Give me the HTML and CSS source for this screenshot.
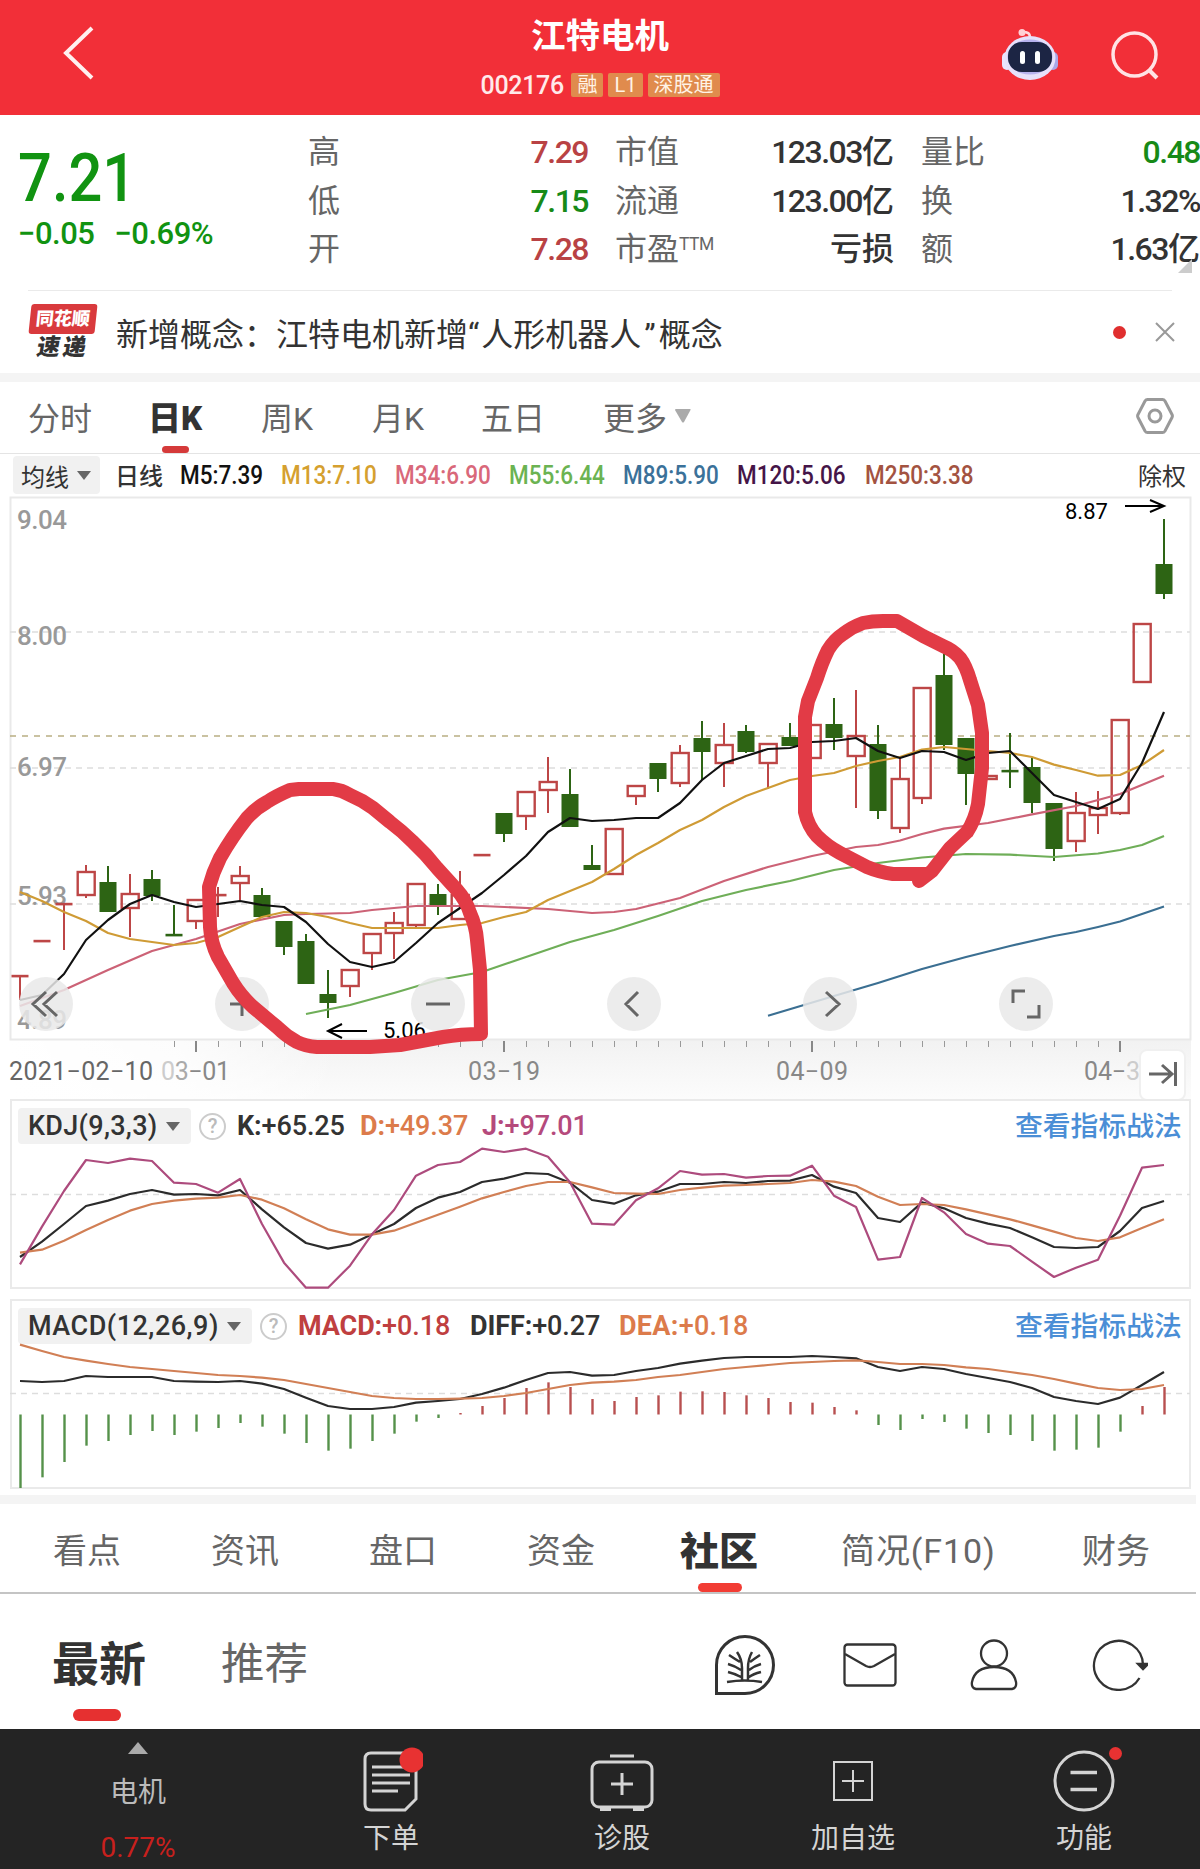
FILE: index.html
```html
<!DOCTYPE html>
<html lang="zh-CN">
<head>
<meta charset="utf-8">
<title>江特电机 002176</title>
<link rel="stylesheet" href="styles.css">
</head>
<body>
<div class="app">
  <header class="topbar">
    <svg class="back" width="40" height="60" viewBox="0 0 40 60"><path d="M34 5 8 30l26 25"/></svg>
    <div class="stock">
      <h1>江特电机</h1>
      <div class="codes"><span class="code">002176</span><span class="tag">融</span><span class="tag">L1</span><span class="tag">深股通</span></div>
    </div>
    <div class="topicons">
      <svg width="58" height="56" viewBox="0 0 58 56">
        <path d="M29 10c0-5-2-6-8-6" fill="none" stroke="#ffd9dd" stroke-width="2.5"/><circle cx="21" cy="4.500" r="3.500" fill="#ffd0d5"/>
        <rect x="1" y="24" width="10" height="18" rx="5" fill="#e9e4ff"/><rect x="47" y="24" width="10" height="18" rx="5" fill="#a9a6e8"/>
        <ellipse cx="29" cy="30" rx="25.500" ry="22" fill="#e6e1fb"/>
        <ellipse cx="29" cy="29" rx="22.500" ry="17.500" fill="#b7b2ee"/>
        <rect x="7" y="14" width="44" height="30" rx="14" fill="#1c2544"/>
        <rect x="19" y="23" width="5" height="13" rx="2.500" fill="#fff"/><rect x="34" y="23" width="5" height="13" rx="2.500" fill="#fff"/>
      </svg>
      <svg width="50" height="50" viewBox="0 0 50 50"><circle cx="24.500" cy="24.500" r="21.500" fill="none" stroke="#ffe3e5" stroke-width="3.500"/><path d="m39 40 8 8" stroke="#ffe3e5" stroke-width="4"/></svg>
    </div>
  </header>

  <section class="quote">
    <div class="price">
      <div class="last">7.21</div>
      <div class="change"><span>−0.05</span><span>−0.69%</span></div>
    </div>
    <dl class="stats">
      <dt>高</dt><dd class="up">7.29</dd><dt>市值</dt><dd>123.03<b>亿</b></dd><dt>量比</dt><dd class="down">0.48</dd>
      <dt>低</dt><dd class="down">7.15</dd><dt>流通</dt><dd>123.00<b>亿</b></dd><dt>换</dt><dd>1.32%</dd>
      <dt>开</dt><dd class="up">7.28</dd><dt>市盈<sup>TTM</sup></dt><dd><b>亏损</b></dd><dt>额</dt><dd>1.63<b>亿</b></dd>
    </dl>
    <i class="corner"></i>
  </section>

  <section class="news">
    <div class="brand"><span class="brand-top">同花顺</span><span class="brand-bottom">速递</span></div>
    <p>新增概念：江特电机新增<q>人形机器人</q>概念</p>
    <i class="dot"></i>
    <svg width="20" height="20" viewBox="0 0 20 20"><path d="m1 1 18 18M19 1 1 19" stroke="#999" stroke-width="2"/></svg>
  </section>

  <nav class="periods">
    <span>分时</span><span class="on">日K</span><span>周K</span><span>月K</span><span>五日</span><span class="more">更多<svg width="18" height="16" viewBox="0 0 18 16"><path d="M2 1h14q1 0 .5 1L10 14q-1 1-2 0L1 2Q1 1 2 1z" fill="#aaa"/></svg></span>
    <svg class="gear" width="38" height="38" viewBox="0 0 38 38"><path d="M11.500 2.500h15q1.500 0 2.500 1.500l7 13.500q.8 1.500 0 3L29 34q-1 1.500-2.500 1.500h-15Q10 35.500 9 34L2 20.500q-.8-1.500 0-3L9 4q1-1.500 2.500-1.500z"/><circle cx="19" cy="19" r="6"/></svg>
  </nav>

  <div class="averages">
    <span class="pill">均线<i class="tri"></i></span><span class="cn">日线</span>
    <span class="ma m5">M5:7.39</span><span class="ma m13">M13:7.10</span><span class="ma m34">M34:6.90</span><span class="ma m55">M55:6.44</span><span class="ma m89">M89:5.90</span><span class="ma m120">M120:5.06</span><span class="ma m250">M250:3.38</span>
    <span class="adjust">除权</span>
  </div>

  <svg class="kline" id="kline" width="1200" height="603" viewBox="0 496 1200 603">
    <defs>
      <linearGradient id="axisfade" x1="0" y1="0" x2="0" y2="1"><stop offset="0" stop-color="#f2f2f2"/><stop offset="1" stop-color="#fcfcfc"/></linearGradient>
      <linearGradient id="leftfade"><stop offset="0" stop-color="#fff"/><stop offset=".5" stop-color="#fff" stop-opacity=".8"/><stop offset="1" stop-color="#fff" stop-opacity="0"/></linearGradient>
    </defs>
    <rect x="10" y="1040" width="1181" height="59" fill="url(#axisfade)"/>
    <rect x="10" y="1040" width="330" height="59" fill="url(#leftfade)"/>
    <rect x="10.500" y="497.500" width="1180" height="542" fill="none" stroke="#e9e9e9" stroke-width="2"/>
    <g class="scale">
      <path class="grid" d="M10 632H1190M10 768H1190M10 904H1190"/>
      <path d="M10 736H1190" stroke="#b9ae82" stroke-width="1.500" stroke-dasharray="6 6"/>
      <text x="17" y="529" textLength="50">9.04</text><text x="17" y="645" textLength="50">8.00</text><text x="17" y="776" textLength="50">6.97</text><text x="17" y="905" textLength="50">5.93</text><text x="17" y="1029" textLength="50">4.89</text>
    </g>
    <g id="candles"></g>
    <g id="lines" class="lines"></g>
    <g class="marks"><text x="1065" y="519">8.87</text><text x="383" y="1038">5.06</text>
      <path d="M1125 506h38m-13-6 14 6-14 6M367 1031h-38m13-7-14 7 14 7"/></g>
    <g class="tools">
      <circle cx="46" cy="1004" r="27"/><circle cx="242" cy="1004" r="27"/><circle cx="438" cy="1004" r="27"/><circle cx="634" cy="1004" r="27"/><circle cx="830" cy="1004" r="27"/><circle cx="1026" cy="1004" r="27"/>
      <path d="M46 992 33 1004l13 12M57 992l-13 12 13 12M230 1004h24M242 992v24M426 1004h24M638 992l-12 12 12 12M826 992l13 12-13 12M1013 1003v-12h12M1039 1005v12h-12"/>
    </g>
    <path id="ticks" stroke="#999" stroke-width="1" fill="none"/>
    <path d="M196 1041v11M504 1041v11M812 1041v11M1120 1041v11" stroke="#888" stroke-width="2"/>
    <g class="dates"><text x="9" y="1080" textLength="144" fill="#666">2021−02−10</text><text x="161" y="1080" textLength="69"><tspan fill="#ccc">0</tspan><tspan fill="#aaa">3</tspan>−01</text><text x="468" y="1080" textLength="72">03−19</text><text x="776" y="1080" textLength="72">04−09</text><text x="1084" y="1080" textLength="56">04−<tspan fill="#ccc">3</tspan></text></g>
    <rect x="1140" y="1050" width="45" height="50" rx="7" fill="#fff" stroke="#f0f0f0" stroke-width="2"/>
    <path d="M1149 1074h23m-10-9 10 9-10 9M1175.500 1062v24" fill="none" stroke="#666" stroke-width="3"/>
    <g class="scribble">
      <path d="M299 789H333Q342 790 350 795Q362 800 373 808L390 822Q402 831 413 842Q426 854 437 868L457 890Q466 900 470 913Q476 926 477 940L480 970L481 1034Q461 1034 443 1037L400 1045L370 1047H317Q305 1046 297 1042Q286 1036 277 1027L253 1007Q241 996 233 983L218 957Q211 943 210 927L209 887Q213 872 220 858Q232 837 247 818Q256 808 267 802Q276 796 290 790Z"/>
      <path d="M919 881 932 871 950 848 967 832Q975 820 978 804L982 768V733L978 705 970 680Q966 666 960 658Q953 650 943 646L923 636 897 621H883Q872 621 863 623Q852 627 843 634Q834 640 828 650Q822 662 817 678L808 701 805 717V812Q808 826 817 836Q827 846 840 853L867 867Q879 872 893 874H927"/>
    </g>
  </svg>

  <section class="panel kdj">
    <div class="panel-head"><span class="pill">KDJ(9,3,3)<i class="tri"></i></span><span class="help">?</span>
      <span class="v1"><b>K:</b>+65.25</span><span class="v2"><b>D:</b>+49.37</span><span class="v3"><b>J:</b>+97.01</span><a>查看指标战法</a></div>
    <svg class="plot lines" id="kdj" width="1180" height="190" viewBox="10 1099 1180 190"><path class="grid" d="M10 1194.500H1190"/></svg>
  </section>
  <section class="panel macd">
    <div class="panel-head"><span class="pill">MACD(12,26,9)<i class="tri"></i></span><span class="help">?</span>
      <span class="v1"><b>MACD:</b>+0.18</span><span class="v2"><b>DIFF:</b>+0.27</span><span class="v3"><b>DEA:</b>+0.18</span><a>查看指标战法</a></div>
    <svg class="plot lines" id="macd" width="1180" height="190" viewBox="10 1299 1180 190"><path class="grid" d="M10 1393.500H1190"/></svg>
  </section>

  <nav class="sections"><span>看点</span><span>资讯</span><span>盘口</span><span>资金</span><span class="on">社区</span><span class="profile">简况(F10)</span><span>财务</span></nav>

  <div class="feed">
    <span class="on">最新</span><span>推荐</span>
    <svg width="60" height="60" viewBox="0 0 60 60" stroke-width="3"><path d="M1.500 58.500V30a28.500 28.500 0 1 1 28.500 28.500z"/><path stroke-width="2.500" d="M12 47q18-3 35 0M27 46V33q0-9-5-16M33 46V33q0-9 4-16M14 20q6 4 11 7M13 29q7 2 13 6M13 37q8 2 13 5M45 20q-6 4-10 7M46 29q-7 2-12 6M46 37q-8 2-12 5"/></svg>
    <svg width="54" height="50" viewBox="0 0 54 50"><rect x="1.500" y="4.500" width="51" height="41" rx="3"/><path d="m2 14 21 12q4 2 8 0l21-12"/></svg>
    <svg width="48" height="52" viewBox="0 0 48 52"><circle cx="24" cy="14.500" r="13"/><path d="M6 50q-5-1-4-7 3-15 22-15t22 15q1 6-4 7z"/></svg>
    <svg width="56" height="52" viewBox="0 0 56 52"><path d="M47.500 39A24.500 24.500 0 1 1 51 26"/><path d="m46 25 5 5 5-5z" fill="#333"/></svg>
  </div>

  <footer class="tabbar">
    <div class="sector"><i></i><span>电机</span><em>0.77%</em></div>
    <div><svg width="64" height="68" viewBox="0 0 64 68"><path d="M12 9h33q12 0 12 10v36L46 66H12q-6 0-6-6V15q0-6 6-6z"/><path d="M13 23h35M13 31h38M13 39h38M13 47h26"/><circle cx="53" cy="16" r="12.500" fill="#e83232" stroke="none"/></svg><span>下单</span></div>
    <div><svg width="64" height="68" viewBox="0 0 64 68"><rect x="2" y="18" width="60" height="45" rx="7"/><path d="M20 12h24M32 29v22M21 40h22"/><path d="M10 65h11M43 65h11" stroke-width="4"/></svg><span>诊股</span></div>
    <div><svg width="64" height="68" viewBox="0 0 64 68" stroke-width="2"><rect x="13" y="18" width="38" height="38"/><path d="M32 26v22M21 37h22"/></svg><span>加自选</span></div>
    <div><svg width="78" height="68" viewBox="-3 0 78 68"><circle cx="36" cy="37" r="29"/><path stroke-width="3.500" d="M22.500 28.500h26.500M22.500 45.500h26.500"/><circle cx="67.500" cy="9.500" r="6.500" fill="#e83232" stroke="none"/></svg><span>功能</span></div>
  </footer>
</div>
<script src="charts.js"></script>
</body>
</html>
```
FILE: styles.css
```css
* { box-sizing: border-box; }
body { margin: 0; background: #fff; color: #333; font-family: Roboto, "Noto Sans CJK SC", sans-serif; }
.app { width: 1200px; height: 1869px; overflow: hidden; display: flex; flex-direction: column; }
.app > * { flex: none; }
h1, p, dl, dd { margin: 0; }
svg { display: block; flex: none; }

.topbar { height: 115px; background: #f22f38; color: #fff; display: grid; grid-template-columns: 400px 400px 400px; }
.back { margin: 23px 0 0 58px; fill: none; stroke: #fff0f0; stroke-width: 4; }
.stock { display: flex; flex-direction: column; align-items: center; padding-top: 14px; }
.stock h1 { font-size: 34.500px; line-height: 44px; font-weight: 700; }
.codes { display: flex; gap: 5px; margin-top: 15px; height: 24px; align-items: center; }
.code { font-size: 25px; width: 86px; font-weight: 500; letter-spacing: -.3px; color: #ffeaea; }
.tag { height: 24px; line-height: 24px; padding: 0 6px; font-size: 20px; background: #e08b4d; border-radius: 2px; color: #fff3e6; }
.topicons { display: flex; gap: 51px; padding: 28px 0 0 201px; }
.topicons svg + svg { margin-top: 2px; }

.quote { position: relative; height: 175px; display: grid; grid-template-columns: 308px 892px; }
.price { padding: 28px 0 0 18px; color: #119311; }
.last { font-size: 67px; line-height: 70px; font-weight: 500; transform: scaleX(.89); transform-origin: left; }
.change { display: flex; gap: 20px; font-size: 31px; font-weight: 500; letter-spacing: -.5px; line-height: 40px; margin-top: 1px; }
.stats { display: grid; grid-template-columns: 90px 190px 117px 189px 109px 197px; grid-auto-rows: 48.700px; padding-top: 13px; line-height: 48px; font-size: 32px; white-space: nowrap; }
.stats dt { color: #666; }
.stats dt:nth-of-type(3n+2) { padding-left: 27px; }
.stats dt:nth-of-type(3n) { padding-left: 27px; }
.stats dd { text-align: right; font-weight: 500; letter-spacing: -1.500px; }
.stats b { font-weight: 500; letter-spacing: 0; }
.stats sup { font-size: 17.500px; letter-spacing: -.5px; line-height: 1; vertical-align: 10px; }
.stats .up { color: #b94244; }
.stats .down { color: #178a17; }
.corner { position: absolute; right: 8px; bottom: 17px; width: 14px; height: 14px; background: #ccc; clip-path: polygon(100% 0, 100% 100%, 0 100%); }

.news { height: 83px; margin-left: 28px; border-top: 1px solid #eaeaea; display: grid; grid-template-columns: 88px 997px 42px 20px; align-items: center; width: 1144px; }
.news p { font-size: 32px; white-space: nowrap; }
.news q { quotes: "“" "”"; }
.news q::before { margin-right: 2px; }
.news q::after { margin: 0 3px 0 3px; }
.news .dot { width: 13px; height: 13px; border-radius: 50%; background: #e02f2f; }
.brand { display: flex; flex-direction: column; width: 70px; align-items: center; font-weight: 900; }
.brand-top { width: 66px; height: 30px; line-height: 29px; font-size: 18px; text-align: center; color: #fff; background: #d93a3d; border-radius: 3px; transform: skewX(-6deg); }
.brand-bottom { font-size: 23px; line-height: 27px; letter-spacing: 3px; transform: skewX(-10deg); }

.periods { border-top: 9px solid #f4f4f4; border-bottom: 1px solid #e4e4e4; height: 81px; display: grid; grid-template-columns: 120px 113px 111px 109px 122px 533px 38px; padding: 0 0 3px 28px; align-items: center; font-size: 32px; color: #666; }
.periods .on { position: relative; font-size: 33px; font-weight: 900; color: #333; }
.periods .on::after { content: ""; position: absolute; left: 14px; bottom: -13px; width: 27px; height: 7px; border-radius: 4px; background: #d53a3a; }
.more { display: flex; align-items: center; gap: 7px; }
.gear { fill: none; stroke: #999; stroke-width: 3; }

.averages { height: 42px; display: grid; grid-template-columns: 102px 65px 101px 114px 114px 114px 114px 128px 273px 60px; padding-left: 13px; align-items: center; font-size: 25px; }
.averages .cn, .averages .adjust { font-size: 24px; margin-top: -1px; }
.averages .cn { font-weight: 500; }
.ma { font-weight: 500; transform: scaleX(.9); transform-origin: left; white-space: nowrap; }
.m5 { color: #111; }
.m13 { color: #d5a02f; }
.m34 { color: #d9687a; }
.m55 { color: #6bb352; }
.m89 { color: #3b7199; }
.m120 { color: #451548; }
.m250 { color: #a35341; }
.pill { display: flex; align-items: center; background: #f1f1f1; border-radius: 4px; }
.tri { border: 7px solid transparent; border-top: 9px solid #666; border-bottom: 0; margin-left: 8px; }
.averages .pill { width: 87px; height: 38px; font-size: 24px; padding-left: 8px; }

.kline { height: 603px; font-size: 26px; }
.kline text { font-family: Roboto, sans-serif; }
.scale text { fill: #999; font-weight: 500; }
.grid { stroke: #ddd; stroke-width: 1.500; stroke-dasharray: 6 5; }
.lines polyline { fill: none; stroke-width: 2.200; stroke-linejoin: round; }
.marks { font-size: 22px; }
.marks path { fill: none; stroke: #000; stroke-width: 2; }
.tools circle { fill: #e9e9e9; fill-opacity: .85; }
.tools path { fill: none; stroke: #666; stroke-width: 3; }
.dates { fill: #888; font-size: 25px; }
.scribble path { fill: none; stroke: #e23b46; stroke-width: 14; stroke-linejoin: round; stroke-linecap: round; }

.panel { width: 1181px; height: 190px; margin-left: 10px; border: 2px solid #eaeaea; position: relative; }
.macd { margin-top: 10px; }
.panel-head { display: grid; align-items: center; height: 36px; margin: 7px 0 0 6px; font-size: 27px; }
.kdj .panel-head { grid-template-columns: 181px 38px 123px 122px 533px 170px; }
.macd .panel-head { grid-template-columns: 242px 38px 172px 149px 396px 170px; }
.panel-head b { font-weight: 700; }
.panel-head span { font-weight: 500; letter-spacing: -.1px; }
.panel-head .pill { height: 36px; padding-left: 10px; letter-spacing: .3px; }
.kdj .pill { width: 173px; }
.macd .pill { width: 234px; }
.macd .panel-head .pill { letter-spacing: .5px; }
.macd .v3 { letter-spacing: .3px; }
.panel-head a { font-size: 27.800px; line-height: 34px; padding-top: 1px; font-weight: 500; color: #4a8ed6; }
.help { width: 27px; height: 27px; border: 2px solid #ccc; border-radius: 50%; color: #bbb; font-size: 20px; line-height: 23px; text-align: center; }
.kdj .v2, .macd .v3 { color: #dc7b4b; }
.kdj .v3 { color: #b54a7c; }
.macd .v1 { color: #bf3f40; }
.plot { position: absolute; left: -2px; top: -2px; }

.sections { margin-top: 6px; border-top: 9px solid #f4f4f4; border-bottom: 2px solid #c4c4c4; height: 99px; width: 1196px; display: grid; grid-template-columns: 158px 158px 158px 153px 161px 241px 80px; padding-left: 53px; align-items: center; font-size: 34px; color: #666; }
.sections .on { position: relative; font-size: 39px; font-weight: 900; color: #333; }
.sections .on::after { content: ""; position: absolute; left: 18px; bottom: -16px; width: 44px; height: 9px; border-radius: 5px; background: #f23c34; }
.profile { letter-spacing: .9px; }

.feed { height: 135px; display: grid; grid-template-columns: 169px 494px 128px 127px 122px 60px; padding: 6px 0 0 52px; align-items: center; font-size: 43.500px; color: #666; }
.feed span { line-height: 60px; margin-top: 1px; }
.feed svg { fill: none; stroke: #333; stroke-width: 2.300; }
.feed svg:first-of-type { stroke-width: 3; }
.feed .on { position: relative; font-size: 47px; font-weight: 700; color: #333; }
.feed .on::after { content: ""; position: absolute; left: 21px; bottom: -26px; width: 48px; height: 12px; border-radius: 6px; background: #e63030; }

.tabbar { height: 140px; background: #242424; display: grid; grid-template-columns: 276px 230px 232px 230px 232px; color: #d4d4d4; font-size: 28px; }
.tabbar > div { display: flex; flex-direction: column; align-items: center; justify-content: space-between; padding: 15px 0 10px; }
.tabbar svg { fill: none; stroke: #d4d4d4; stroke-width: 3; }
.tabbar svg[stroke-width="2"] { stroke-width: 2; }
.tabbar span { line-height: 40px; }
.tabbar .sector { padding: 13px 0 4px; color: #bbb; }
.sector i { border: 10px solid transparent; border-bottom: 12px solid #aaa; border-top: 0; }
.sector em { font-style: normal; line-height: 34px; color: #c8201d; }
```
FILE: charts.js
```js
const NS = "http://www.w3.org/2000/svg";
const xAt = i => 20 + 22 * i;
function add(parent, tag, attrs) {
  const el = document.createElementNS(NS, tag);
  for (const k in attrs) el.setAttribute(k, attrs[k]);
  parent.appendChild(el);
}
function line(parent, color, pts) {
  add(parent, "polyline", { stroke: color, points: pts.map(p => xAt(p[0]) + "," + p[1]).join(" ") });
}
const series = (values, start = 0) => values.map((v, i) => [i + start, v]);

// [direction, high, body top, body bottom, low]
const R = 1, G = 0;
const candles = [
  [R,976,976,976,1000],[R,941,941,941,941],[R,904,904,904,950],[R,865,871,896,898],[G,866,882,912,912],
  [R,874,893,909,937],[G,870,879,896,901],[G,905,935,936,936],[R,899,899,922,929],[R,887,895,895,917],
  [R,866,875,884,900],[G,888,895,917,917],[G,921,921,947,955],[G,934,941,984,984],[G,970,994,1003,1018],
  [R,969,969,987,997],[R,933,933,954,970],[R,912,922,934,959],[R,883,883,926,929],[G,884,894,905,915],
  [R,871,894,920,920],[R,855,855,855,855],[G,813,813,834,842],[R,791,791,817,830],[R,757,781,791,813],
  [G,769,794,827,827],[G,845,865,870,870],[R,828,828,875,875],[R,785,785,797,805],[G,763,763,779,792],
  [R,745,752,784,787],[G,721,738,752,780],[R,723,744,764,787],[G,725,731,752,753],[R,743,743,764,789],
  [G,723,737,746,746],[R,724,724,759,759],[G,698,724,738,750],[R,690,735,757,808],[G,725,744,811,819],
  [R,757,778,829,833],[R,687,687,799,804],[G,654,675,745,750],[G,738,738,774,805],[R,775,775,780,780],
  [G,733,771,771,788],[G,758,767,803,813],[G,803,803,849,861],[R,792,812,842,852],[R,791,807,816,834],
  [R,719,719,814,815],[R,623,623,683,683],[G,519,564,594,599]
];
const cg = document.getElementById("candles");
candles.forEach(([dir, hi, top, bot, lo], i) => {
  const x = xAt(i), c = dir ? "#bd4646" : "#2d6414";
  if (hi < top) add(cg, "path", { d: `M${x} ${hi}V${top}`, stroke: c, "stroke-width": 2 });
  if (lo > bot) add(cg, "path", { d: `M${x} ${bot}V${lo}`, stroke: c, "stroke-width": 2 });
  if (bot - top < 3) add(cg, "rect", { x: x - 8.5, y: top - 1.2, width: 17, height: 2.6, fill: c });
  else if (dir) add(cg, "rect", { x: x - 8.3, y: top + 1, width: 17, height: bot - top - 2, fill: "none", stroke: c, "stroke-width": 2.4 });
  else add(cg, "rect", { x: x - 8.5, y: top, width: 17, height: bot - top, fill: c });
});

const lg = document.getElementById("lines");
line(lg, "#3b6f92", [[34,1015.7],[37,996],[39,983],[41,969],[43,957],[45,946],[47,936],[48,932],[49,927],[50,921.5],[51,914],[52,906.5]]);
line(lg, "#6fae58", [[13,1014],[15,1005],[17,993],[19,980],[21,972],[23,957],[25,942],[27,930],[29,916],[31,901],[33,890],[35,881],[37,870],[39,863],[41,857.5],[43,854],[45,854.7],[47,857],[49,853.5],[50,850],[51,845],[52,836]]);
line(lg, "#cc6276", [[0,1006],[2,990],[4,970],[6,951],[8,939],[10,924],[12,915],[13,914],[15,913],[16,910],[18,906],[21,906],[24,909],[26,913],[27,912],[28,909],[30,898],[32,881],[34,867],[36,856],[38,847],[39,845],[40,840.5],[41,834],[42,828.6],[44,823],[46,814.4],[48,806],[50,794],[52,775.7]]);
line(lg, "#cf9b35", series([892,901,912,921,933,939,942,945,943,937,927,917,912,913,917,923,928,928,928,928,925,923,917,912,900,891,882,869,855,843,830,820,807,796,788,780,776,773,766,761,757,749.6,747,749,751,753,757,764.6,770,775.7,775,765,750]));
line(lg, "#111", series([1000,995,974,940,920,904,895,902,907,904,901,905,907,922,944,962,967,962,943,923,908,893,875,856,832,818,821,820,818,818,803,780,763,756,749,748,742,741,738,751,758,751,752,760,753,751,773,795,802,809,799,763,712]));

let ticks = "";
for (let i = 7; i <= 50; i++) ticks += `M${xAt(i) + .5} 1041v6`;
document.getElementById("ticks").setAttribute("d", ticks);

// indicator samples are stored in thirds of a pixel below y = 1095
const sub = values => series(values.map(v => 1095 + v / 3));
const kdj = document.getElementById("kdj");
line(kdj, "#2b2b2b", sub([486,440,387,333,317,297,285,299,297,301,285,343,397,444,461,449,418,387,339,308,291,261,251,234,237,263,315,326,301,290,267,267,261,264,258,257,240,275,294,369,381,322,340,369,386,399,427,456,459,456,408,339,318]));
line(kdj, "#d17f55", sub([473,464,437,405,375,347,327,317,311,308,300,314,340,373,403,419,419,407,383,359,335,310,291,273,261,261,277,294,296,297,285,278,272,270,267,264,255,260,273,305,330,327,330,343,358,373,391,410,429,438,427,399,373]));
line(kdj, "#ad4b7d", sub([508,395,288,195,204,191,198,263,267,293,252,387,503,578,578,512,418,345,242,210,201,161,171,161,185,262,386,389,316,280,228,239,237,248,243,242,212,302,336,494,486,309,352,417,446,453,500,546,518,494,362,218,210]));

const macd = document.getElementById("macd");
[1179,1147,1101,1052,1038,1020,1008,1020,1010,999,984,995,1016,1044,1067,1061,1038,1016,980,969,954,933,909,879,862,876,912,918,906,901,890,889,891,901,909,921,923,936,946,990,1005,972,981,1001,1014,1020,1038,1067,1064,1058,1010,933,876].forEach((v, i) => {
  add(macd, "path", { d: `M${xAt(i) + .5} 1414.5V${1095 + v / 3}`, stroke: v > 958 ? "#55914a" : "#b85050", "stroke-width": 2.4 });
});
line(macd, "#2b2b2b", sub([858,861,858,843,846,846,846,858,860,861,858,866,882,908,933,942,942,936,923,918,912,897,878,855,834,831,842,840,828,819,806,797,789,786,786,786,783,786,790,816,828,816,822,837,849,861,879,906,918,927,908,870,831]));
line(macd, "#d17f55", sub([749,768,786,797,807,816,822,828,834,840,843,848,855,867,879,891,903,909,912,912,911,909,903,894,882,870,863,860,855,846,840,831,822,816,810,804,801,798,796,801,807,807,810,817,822,831,840,852,866,879,885,882,870]));
```
